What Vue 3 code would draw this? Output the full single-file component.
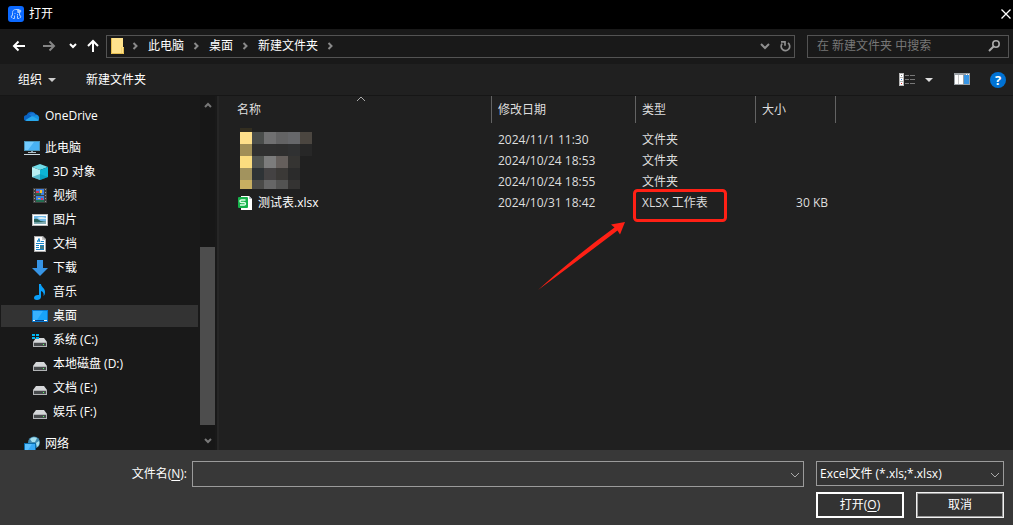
<script setup>
import { ref } from 'vue'

const crumbs = ['此电脑', '桌面', '新建文件夹']
const places = [
  { icon: 'cube', name: '3D 对象' },
  { icon: 'video', name: '视频' },
  { icon: 'picture', name: '图片' },
  { icon: 'doc', name: '文档' },
  { icon: 'download', name: '下载' },
  { icon: 'music', name: '音乐' },
  { icon: 'desktop', name: '桌面' },
  { icon: 'system', name: '系统 (C:)' },
  { icon: 'disk', name: '本地磁盘 (D:)' },
  { icon: 'disk', name: '文档 (E:)' },
  { icon: 'disk', name: '娱乐 (F:)' }
]
const nav = [
  { icon: 'cloud', name: 'OneDrive', root: true },
  { icon: 'pc', name: '此电脑', root: true, gap: true },
  ...places,
  { icon: 'network', name: '网络', root: true, gap: true }
]
const current = ref('desktop')
const files = [
  { date: '2024/11/1 11:30', type: '文件夹' },
  { date: '2024/10/24 18:53', type: '文件夹' },
  { date: '2024/10/24 18:55', type: '文件夹' },
  { name: '测试表.xlsx', date: '2024/10/31 18:42', type: 'XLSX 工作表', size: '30 KB' }
]
const mosaic = [
  { y: 0, h: 4, c: ['#332e20'] },
  { y: 4, h: 12, c: ['#ffe08a', '#4a4d4b', '#707071', '#636364', '#66676a', '#4b4640'] },
  { y: 16, h: 12, c: ['#a18f57', '#303030', '#303030', '#2f2f2f', '#303132', '#272727'] },
  { y: 28, h: 12, c: ['#fbdd7f', '#515451', '#7c7c7c', '#655f5c', '#353432'] },
  { y: 40, h: 12, c: ['#a2935e', '#2e3336', '#444243', '#3b3937', '#2b2b2b'] },
  { y: 52, h: 9, c: ['#c7ae61', '#4a4a48', '#666666', '#535352', '#343332'] }
]
const filename = ref('')
</script>

<template>
  <div class="dialog">
    <header class="titlebar">
      <svg class="i16" viewBox="0 0 16 16">
        <rect width="16" height="16" rx="3" fill="#0b69ff" />
        <path d="M4.500 9.500V6.500C4.500 4.500 6 3.500 7.800 3.500H11M11.500 7v2.500M4.500 8.500L3 11l1.500 1M6.500 9.500v3H5M9.500 9.500v3H11M11.500 8.500L13 11l-1.500 1" fill="none" stroke="#a9ccff" stroke-width="1" />
        <path d="M9 3.500h3l1.500 1.500L12 7H9.500z" fill="#a9ccff" />
        <path d="M6.500 7.500h1M9 8.500h1" stroke="#a9ccff" />
      </svg>
      <h1>打开</h1>
      <button class="close" aria-label="关闭">
        <svg class="i16" viewBox="0 0 16 16"><path d="M4.500 3.500l9 9M13.500 3.500l-9 9" stroke="#fff" stroke-width="1.300" /></svg>
      </button>
    </header>

    <nav class="address" aria-label="地址">
      <div class="history">
        <button aria-label="后退"><svg class="i16" viewBox="0 0 16 16"><path d="M14 8H3M7.500 3.500L3 8l4.500 4.500" fill="none" stroke="#fff" stroke-width="2" /></svg></button>
        <button aria-label="前进"><svg class="i16" viewBox="0 0 16 16"><path d="M2 8h11M8.500 3.500L13 8l-4.500 4.500" fill="none" stroke="#858585" stroke-width="2" /></svg></button>
        <button aria-label="最近浏览的位置" class="slim"><svg width="8" height="16" viewBox="0 0 8 16"><path d="M1 6l3 3 3-3" fill="none" stroke="#fff" stroke-width="2" /></svg></button>
        <button aria-label="上移"><svg class="i16" viewBox="0 0 16 16"><path d="M8 14V3M3 8l5-5 5 5" fill="none" stroke="#fff" stroke-width="2" /></svg></button>
      </div>
      <div class="path">
        <svg class="i16 folder" viewBox="0 0 16 16">
          <path d="M1 0h12v9h1v7H1z" fill="#ffe28c" /><path d="M1.500 0v15.500h12v-6" fill="none" stroke="#e5bd50" /><path d="M11.500 9v6" stroke="#f4d271" />
        </svg>
        <svg class="sep" viewBox="0 0 8 10"><path d="M2.500 2l3 3-3 3" /></svg>
        <template v-for="c in crumbs" :key="c">
          <button class="crumb">{{ c }}</button>
          <svg class="sep" viewBox="0 0 8 10"><path d="M2.500 2l3 3-3 3" /></svg>
        </template>
        <button class="drop" aria-label="以前的位置"><svg class="i16" viewBox="0 0 16 16"><path d="M4 6l4 4 4-4" fill="none" stroke="#8f8f8f" stroke-width="2" /></svg></button>
        <button class="refresh" aria-label="刷新"><svg class="i16" viewBox="0 0 16 16"><path d="M5.200 5.500A4.300 4.300 0 1 0 11 4.900" fill="none" stroke="#8f8f8f" stroke-width="1.700" /><path d="M4 3.800h4v4" fill="none" stroke="#8f8f8f" stroke-width="1.700" /></svg></button>
      </div>
      <label class="search">
        <input type="search" placeholder="在 新建文件夹 中搜索" aria-label="搜索" />
        <svg class="i16" viewBox="0 0 16 16"><circle cx="10" cy="6" r="3.200" fill="none" stroke="#aaa" stroke-width="1.600" /><path d="M7.500 8.500L3 13" stroke="#aaa" stroke-width="2" /></svg>
      </label>
    </nav>

    <div class="toolbar">
      <button>组织<svg class="tri" viewBox="0 0 8 4"><path d="M0 0h8L4 4z" fill="#ccc" /></svg></button>
      <button>新建文件夹</button>
      <div class="tools">
        <button aria-label="更改视图">
          <svg class="i16" viewBox="0 0 16 16" shape-rendering="crispEdges">
            <path d="M0 1h5v13H0z" fill="#b8b8b8" /><path d="M1 2h3v3H1zM1 6h3v3H1zM1 10h3v3H1z" fill="#fff" />
            <path d="M2 3h1v1H2z" fill="#777" /><path d="M2 7h1v1H2z" fill="#3b82d0" /><path d="M2 11h1v1H2z" fill="#d22" />
            <path d="M6 3.500h4M11 3.500h5M6 7.500h4M11 7.500h5M6 11.500h4M11 11.500h5" stroke="#777" />
          </svg>
        </button>
        <button aria-label="更多选项" class="more"><svg class="tri" viewBox="0 0 8 4"><path d="M0 0h8L4 4z" fill="#ddd" /></svg></button>
        <button aria-label="预览窗格" class="preview">
          <svg class="i16" viewBox="0 0 16 16" shape-rendering="crispEdges">
            <path d="M0 1h16v12H0z" fill="#9aa0a5" /><path d="M1 3h8v9H1z" fill="#fff" /><path d="M4 3h1v9H4z" fill="#c5c5c5" /><path d="M10 3h5v9h-5z" fill="#3795e4" /><path d="M12 2h1v1h-1zM14 2h1v1h-1z" fill="#fff" />
          </svg>
        </button>
        <button aria-label="获取帮助" class="help">?</button>
      </div>
    </div>

    <main class="body">
      <aside class="side">
        <ul>
          <li v-for="n in nav" :key="n.name" :class="{ root: n.root, gap: n.gap }">
            <button :class="{ on: n.icon === current }" @click="current = n.icon">
              <svg class="i16" viewBox="0 0 16 16">
                <g v-if="n.icon === 'cloud'">
                  <path d="M3 13a3 3 0 0 1-.5-6A5.200 5.200 0 0 1 11.500 6 4 4 0 0 1 13 13z" fill="#0a63c2" />
                  <path d="M5 6.500A5.200 5.200 0 0 1 11.500 6L9 9z" fill="#1b7ad8" />
                  <path d="M9 8l3.500-1.200A3.200 3.200 0 0 1 13 13H9z" fill="#1590e0" />
                  <path d="M1.500 12L8 8l7.200 4Q14.500 13 13 13H3Q2 13 1.500 12z" fill="#28a8ec" />
                </g>
                <g v-else-if="n.icon === 'pc'">
                  <path d="M0 1h16v10H0z" fill="#4d95b8" /><path d="M1 2h14v8H1z" fill="#48b2f4" /><path d="M1 2h9L4 10H1z" fill="#72cbff" />
                  <path d="M7 11h2v1H7z" fill="#8b9ba5" /><path d="M4 12h8v1H4z" fill="#aebdc5" /><path d="M0 14h16v1H0z" fill="#c9d7df" />
                </g>
                <g v-else-if="n.icon === 'cube'">
                  <path d="M0 3l8-3 8 3-8 3z" fill="#70dce8" /><path d="M0 3l8 3v10l-8-3z" fill="#b9eff3" /><path d="M16 3L8 6v10l8-3z" fill="#0cb4d5" /><path d="M0 13l8-3 8 3-8 3z" fill="#078fae" opacity=".55" />
                </g>
                <g v-else-if="n.icon === 'video'" shape-rendering="crispEdges">
                  <path d="M1 0h14v15H1z" fill="#414141" /><path d="M2 1h1v1H2zM2 4h1v1H2zM2 7h1v1H2zM2 10h1v1H2zM2 13h1v1H2zM13 1h1v1h-1zM13 4h1v1h-1zM13 7h1v1h-1zM13 10h1v1h-1zM13 13h1v1h-1z" fill="#999" />
                  <path d="M4 1h8v6H4zM4 8h8v6H4z" fill="#407fe0" /><path d="M4 3h3v2H4zM9 10h2v2H9z" fill="#db3658" /><path d="M8 2h2v3H8zM6 10h2v1H6z" fill="#f6c62c" /><path d="M4 5h5v2H4zM4 12h8v2H4z" fill="#236d51" />
                </g>
                <g v-else-if="n.icon === 'picture'">
                  <path d="M0 2h16v12H0z" fill="#bbb" /><path d="M1 3h14v10H1z" fill="#fff" /><path d="M2 4h12v8H2z" fill="#70b9e9" /><path d="M2 7q3-1 5 1t7 1v3H2z" fill="#29635b" /><path d="M2 10q6 1 12-1v3H2z" fill="#83aeb4" /><path d="M5 6q4-2 9 0v1H8z" fill="#dbeef5" />
                </g>
                <g v-else-if="n.icon === 'doc'">
                  <path d="M2 0h9l3 3v13H2z" fill="#aaa" /><path d="M3 1h7v3h3v11H3z" fill="#fff" /><path d="M10 1v3h3z" fill="#ccc" />
                  <path d="M5.500 6L7 2.500 8 6M5 5h3M9 5.500h3M4 7.500h8M4 9.500h3M8 9.500h4M4 11.500h3M4 13.500h8" fill="none" stroke="#1583c6" stroke-width="1" /><path d="M8 10h4v3H8z" fill="#427b88" />
                </g>
                <path v-else-if="n.icon === 'download'" d="M5 0h6v8h5l-8 8-8-8h5z" fill="#3795e6" />
                <path v-else-if="n.icon === 'music'" d="M7 0h2c0 3 4 4 4 8 0 2-.5 3-1.500 4 .5-2.500 0-4-2.500-5v6c0 2-2 3-4 3s-3-1-3-2.300c0-2 2.500-3.200 5-2.700z" fill="#0aa0fa" />
                <g v-else-if="n.icon === 'desktop'">
                  <path d="M0 2h16v12H0z" fill="#0878cf" /><path d="M1 3h14v9H1z" fill="#18a3fb" /><path d="M1 3h10L5 12H1z" fill="#38b1ff" /><path d="M1 12h14v1H1z" fill="#073f80" /><path d="M1 12h2v1H1zM12 12h3v1h-3z" fill="#fff" />
                </g>
                <g v-else-if="n.icon === 'network'">
                  <circle cx="10" cy="6.500" r="6" fill="#428bb1" /><path d="M6 3q3-3 7-1l-2 4H8zM12 7l3-2q1 4-2 6z" fill="#a6e0ee" />
                  <path d="M0 7h12v8H0z" fill="#086dac" /><path d="M1 8h10v6H1z" fill="#38aaf7" /><path d="M1 8h7l-4 6H1z" fill="#5abfff" />
                </g>
                <g v-else>
                  <path d="M4 6h8l3 4H1z" fill="#d5d7d9" /><path d="M1 10h14v5H1z" fill="#b2b4b6" /><path d="M2 11h12v3H2z" fill="#46494b" /><path d="M11 12h1v1h-1z" fill="#57ff65" />
                  <path v-if="n.icon === 'system'" d="M0 2h3v2H0zM4 2h3v2H4zM0 5h3v2H0zM4 5h3v2H4z" fill="#00b5f0" />
                </g>
              </svg>
              <span>{{ n.name }}</span>
            </button>
          </li>
        </ul>
        <div class="scroll">
          <svg class="arrow" viewBox="0 0 8 6"><path d="M1 5l3-3 3 3" /></svg>
          <div class="track"><div class="thumb"></div></div>
          <svg class="arrow" viewBox="0 0 8 6"><path d="M1 1l3 3 3-3" /></svg>
        </div>
      </aside>

      <section class="list">
        <table>
          <colgroup><col class="c-name" /><col class="c-date" /><col class="c-type" /><col class="c-size" /><col /></colgroup>
          <thead>
            <tr><th>名称</th><th>修改日期</th><th>类型</th><th>大小</th><td></td></tr>
          </thead>
          <tbody>
            <tr v-for="f in files" :key="f.date">
              <td>
                <div v-if="f.name" class="file">
                  <svg class="i16" viewBox="0 0 16 16">
                    <path d="M4 1h8l3 3v11H4z" fill="#fff" /><path d="M12 1v3h3z" fill="#b9c1cb" /><rect x="1" y="2" width="10" height="11" rx="1" fill="#16b24b" />
                    <path d="M8.500 5H4.500Q3 5 3 6.200T4.500 7.500h2.500q1.500 0 1.500 1.300T7 10H3" fill="none" stroke="#e2ffea" stroke-width="1.300" />
                  </svg>
                  <span>{{ f.name }}</span>
                </div>
              </td>
              <td>{{ f.date }}</td><td>{{ f.type }}</td><td class="size">{{ f.size }}</td><td></td>
            </tr>
          </tbody>
        </table>
        <svg class="sort" viewBox="0 0 10 6"><path d="M1 5l4-4 4 4" fill="none" stroke="#aaa" /></svg>
        <svg class="mosaic" viewBox="0 0 72 61" shape-rendering="crispEdges">
          <template v-for="r in mosaic" :key="r.y">
            <rect v-for="(c, i) in r.c" :key="i" :x="i * 12" :y="r.y" width="12" :height="r.h" :fill="c" />
          </template>
        </svg>
        <svg class="mark" viewBox="0 0 190 104">
          <rect x="96.500" y="2.500" width="91" height="30" rx="3" fill="none" stroke="#ff2015" stroke-width="3" />
          <path d="M87 34L73 36.500 76.500 39.500Q36 69 0 102 42 71 79.500 42.500L82 46.500z" fill="#ff2015" />
        </svg>
      </section>
    </main>

    <footer class="footer">
      <div class="row">
        <label for="fname">文件名(<u>N</u>):</label>
        <div class="combo">
          <input id="fname" v-model="filename" type="text" />
          <svg class="chev" viewBox="0 0 10 6"><path d="M1 1l4 4 4-4" /></svg>
        </div>
        <div class="combo filter">
          <select aria-label="文件类型"><option>Excel文件 (*.xls;*.xlsx)</option></select>
          <svg class="chev" viewBox="0 0 10 6"><path d="M1 1l4 4 4-4" /></svg>
        </div>
      </div>
      <div class="actions">
        <button class="open">打开(<u>O</u>)</button>
        <button class="cancel">取消</button>
      </div>
    </footer>
  </div>
</template>

<style>
body { background: #202020; }
</style>

<style scoped>
* { box-sizing: border-box; }
.dialog {
  display: flex; flex-direction: column; height: 100vh; overflow: hidden;
  background: #202020; color: #fff;
  font: 12px/16px "Open Sans", "Noto Sans CJK SC", sans-serif;
}
button, input, select { font: inherit; color: inherit; background: none; border: 0; padding: 0; margin: 0; }
button { display: flex; align-items: center; white-space: nowrap; }
input:focus, select:focus { outline: none; }
svg { display: block; flex: none; }
.i16 { width: 16px; height: 16px; }

.titlebar { display: flex; align-items: center; height: 29px; flex: none; padding: 0 0 2px 8px; background: #000; }
h1 { margin: 0 0 0 5px; font: inherit; }
.close { margin-left: auto; }

.address { display: flex; align-items: center; height: 35px; flex: none; padding: 0 4px 1px 11px; background: #191919; }
.history { display: flex; gap: 14px; width: 95px; }
.history .slim { margin: 0 -6px 0 -2px; }
.path, .search { display: flex; align-items: center; height: 23px; border: 1px solid #535353; }
.path { flex: 1; padding: 0 1px 0 3px; }
.folder { margin-right: 5px; }
.sep { width: 8px; height: 10px; }
.sep path { fill: none; stroke: #8a8a8a; stroke-width: 2; }
.crumb { margin: 0 8px 0 9px; }
.drop { margin-left: auto; margin-right: 4px; }
.search { width: 202px; margin-left: 12px; padding: 0 6px 0 9px; }
.search input { flex: 1; min-width: 0; }
.search input::placeholder { color: #777; opacity: 1; }

.toolbar { display: flex; align-items: center; height: 32px; flex: none; padding: 0 7px 0 18px; gap: 30px; border-bottom: 1px solid #161616; }
.tri { width: 8px; height: 4px; }
.toolbar > button .tri { margin-left: 6px; }
.tools { display: flex; align-items: center; margin-left: auto; }
.more { margin-left: 10px; }
.preview { margin: 0 20px 0 21px; }
.help { justify-content: center; width: 16px; height: 16px; border-radius: 50%; background: #0072d4; font-size: 13px; font-weight: 700; }

.body { display: flex; flex: 1; min-height: 0; }
.side { display: flex; width: 219px; flex: none; background: #191919; border-right: 2px solid #262626; overflow: hidden; }
ul { flex: 1; list-style: none; margin: 0; padding: 8px 2px 0 1px; }
.gap { margin-top: 8px; }
li button { width: 100%; height: 24px; padding-left: 31px; gap: 5px; border: solid transparent; border-width: 1px 0; background-clip: padding-box; }
.root button { padding-left: 23px; }
.on { background-color: #333; }
.scroll { display: flex; flex-direction: column; align-items: center; justify-content: space-between; width: 15px; margin-right: 2px; padding: 6px 0; background: #171717; }
.arrow { width: 8px; height: 6px; }
.arrow path { fill: none; stroke: #777; stroke-width: 2; }
.track { display: flex; align-items: flex-end; flex: 1; width: 100%; padding-bottom: 13px; }
.thumb { width: 100%; height: 56%; min-height: 20px; background: #4d4d4d; }

.list { position: relative; flex: 1; min-width: 0; overflow: hidden; }
table { width: 100%; table-layout: fixed; border-collapse: separate; border-spacing: 0; color: #dedede; }
.c-name { width: 273px; }
.c-date { width: 144px; }
.c-type { width: 120px; }
.c-size { width: 80px; }
th { height: 27px; padding: 0 0 0 6px; text-align: left; font-weight: 400; border-right: 1px solid #636363; }
th:first-child { padding-left: 18px; }
tbody::before { content: ""; display: table-row; height: 6px; }
tbody td { height: 21px; padding: 0 0 0 6px; white-space: nowrap; }
tbody td:first-child { padding-left: 18px; }
.file { display: flex; align-items: center; gap: 5px; color: #fff; }
tbody .size { padding-right: 8px; text-align: right; }
.sort { position: absolute; left: 137px; top: 0; width: 10px; height: 6px; }
.mosaic { position: absolute; left: 21px; top: 32px; width: 72px; height: 61px; }
.mark { position: absolute; left: 319px; top: 92px; width: 190px; height: 104px; pointer-events: none; }

.footer { flex: none; padding: 11px 9px 7px 0; background: #383838; }
.row { display: flex; }
.row label { width: 192px; padding-right: 5px; text-align: right; line-height: 26px; }
.combo { position: relative; flex: 1; height: 26px; }
.combo input, .combo select { display: block; width: 100%; height: 100%; border: 1px solid #9b9b9b; border-radius: 0; appearance: none; }
.combo input { padding: 0 24px 0 4px; }
.combo select { padding: 0 20px 0 3px; background: #333; }
.filter { flex: none; width: 188px; height: 25px; margin-left: 12px; }
.chev { position: absolute; right: 4px; top: 11px; width: 10px; height: 6px; pointer-events: none; }
.chev path { fill: none; stroke: #aaa; }
.actions { display: flex; justify-content: flex-end; gap: 12px; margin-top: 5px; }
.actions button { justify-content: center; width: 88px; height: 26px; background: #333; border: 2px solid #fff; }
.actions .cancel { border: 1px solid #f2f2f2; box-shadow: inset 0 0 0 1px #9b9b9b; }
u { text-underline-offset: 2px; }
</style>
